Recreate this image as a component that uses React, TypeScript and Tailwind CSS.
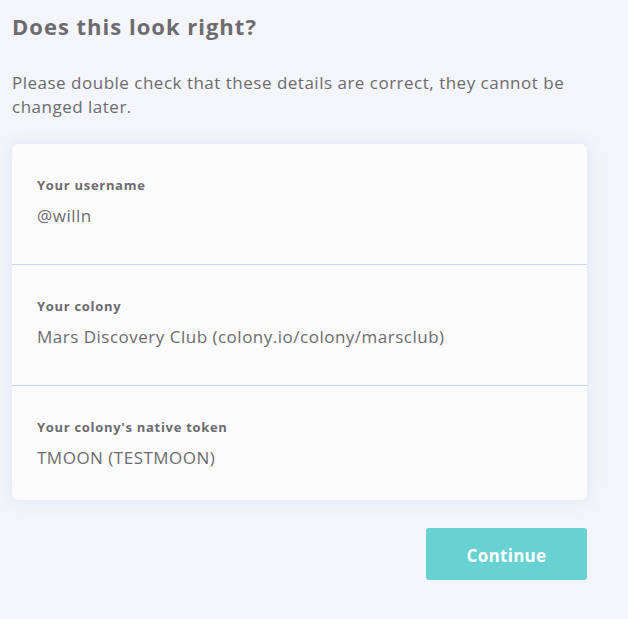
import React from "react";

const rows = [
  { label: "Your username", value: "@willn" },
  { label: "Your colony", value: "Mars Discovery Club (colony.io/colony/marsclub)" },
  { label: "Your colony's native token", value: "TMOON (TESTMOON)" },
];

const App = () => {
  return (
    <div className="min-h-[619px] w-[628px] bg-[#f4f5fa] px-3 pt-[11px] text-[#6d6b6f] font-['Open_Sans',sans-serif]">
      <h1 className="text-[22px] font-bold tracking-[1px] leading-[30px]">Does this look right?</h1>

      <p className="mt-[30px] text-[17px] leading-[24px] tracking-[0.5px] pr-[40px]">
        Please double check that these details are correct, they cannot be changed later.
      </p>

      <div className="mt-[25px] w-[575px] rounded-[6px] bg-[#fbfbfb] shadow-[0_0_16px_rgba(190,205,245,0.45)]">
        {rows.map((row, i) => (
          <div
            key={row.label}
            className={`px-[25px] pt-[32px] ${i < rows.length - 1 ? "h-[121px] border-b border-[#c6d6f3]" : "h-[114px]"}`}
          >
            <div className="text-[13px] font-bold tracking-[0.7px] leading-[18px]">{row.label}</div>
            <div className="mt-[10px] text-[17px] leading-[24px] tracking-[0.5px]">{row.value}</div>
          </div>
        ))}
      </div>

      <div className="mt-[28px] flex w-[575px] justify-end">
        <button className="h-[52px] w-[161px] rounded-[3px] bg-[#68d2d3] pt-[3px] text-[17px] font-bold tracking-[0.3px] text-white">
          Continue
        </button>
      </div>
    </div>
  );
};

export default App;
